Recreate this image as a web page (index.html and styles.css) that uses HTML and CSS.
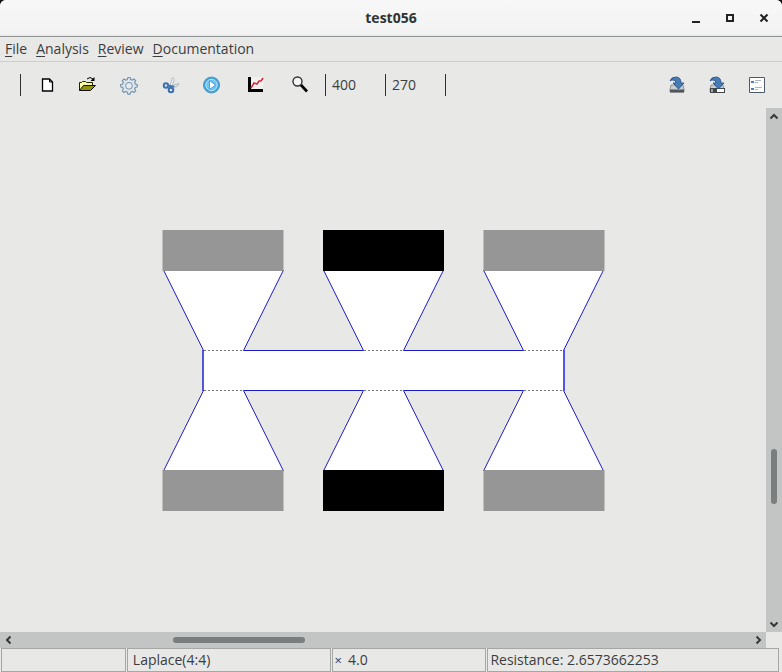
FILE: index.html
```html
<!DOCTYPE html>
<html lang="en">
<head>
<meta charset="utf-8">
<title>test056</title>
<link rel="stylesheet" href="styles.css">
</head>
<body>
<div class="window">
  <header class="titlebar">
    <h1 class="title">test056</h1>
    <div class="window-controls">
      <button type="button" aria-label="Minimize"><svg width="12" height="12"><path d="M2 9h8v2H2z"/></svg></button>
      <button type="button" aria-label="Maximize"><svg width="12" height="12"><path d="M2 2h8v8H2zM4 4v4h4V4z" fill-rule="evenodd"/></svg></button>
      <button type="button" aria-label="Close"><svg width="12" height="12"><path d="M2.500 2.500l7 7m0-7l-7 7" stroke="#222" stroke-width="2"/></svg></button>
    </div>
  </header>

  <nav class="menubar">
    <button type="button"><u>F</u>ile</button>
    <button type="button"><u>A</u>nalysis</button>
    <button type="button"><u>R</u>eview</button>
    <button type="button"><u>D</u>ocumentation</button>
  </nav>

  <div class="toolbar">
    <span class="separator"></span>
    <div class="tools">
      <button type="button" aria-label="New">
        <svg width="24" height="24"><path d="M9.500 6h7l3 3v9h-10z" fill="#fff" stroke="#000" stroke-width="1.300"/><path d="M16.500 6v3h3" fill="none" stroke="#000"/></svg>
      </button>
      <button type="button" aria-label="Open">
        <svg width="24" height="24"><path d="M4.500 17.500v-8h2l1-1h3l1 1h6v3" fill="#fdfd9a" stroke="#222200"/><path d="M4.500 17.500l4-5h12l-5 5z" fill="#929312" stroke="#111"/><path d="M12 6q3-3 6 0" fill="none" stroke="#000"/><path d="M19.500 4v4h-4z"/></svg>
      </button>
      <button type="button" aria-label="Settings">
        <svg width="24" height="24" fill="none" stroke="#7896ae"><path d="M10.900 4.500h2.200l.6 2 1.500.6 1.800-1 1.700 1.700-1 1.800.6 1.500 2 .6v2.200l-2 .6-.6 1.500 1 1.800-1.700 1.700-1.800-1-1.500.6-.6 2h-2.200l-.6-2-1.500-.6-1.800 1-1.700-1.700 1-1.800-.6-1.500-2-.6v-2.200l2-.6.6-1.500-1-1.800L7 6.100l1.800 1 1.500-.6z" fill="#dce6ec" stroke-width="1.200"/><circle cx="12" cy="12.800" r="3.400" fill="#e8e8e7"/></svg>
      </button>
      <button type="button" aria-label="Cut">
        <svg width="24" height="24" fill="none"><path d="M10.500 14L13.500 4.500l2 2-3 8z" fill="#e9eef1" stroke="#a3b2bd" stroke-width=".8"/><path d="M10 13.500l10-3-2 3-6 1.500z" fill="#dce4e8" stroke="#a3b0b8" stroke-width=".8"/><g stroke="#3c70ae" stroke-width="2"><circle cx="7" cy="12.500" r="2.200"/><circle cx="12" cy="17" r="2.300"/></g><path d="M9 12.500l5 1-2 2" stroke="#4476ae" stroke-width="1.800"/></svg>
      </button>
      <button type="button" aria-label="Run">
        <svg width="24" height="24"><circle cx="10.500" cy="12" r="8" fill="#39a3df" stroke="#5797bf"/><circle cx="10.500" cy="12" r="5.700" fill="#69c4f3" stroke="#c2e9fb"/><path d="M8.500 7.500l6 4.500-6 4.500z" fill="#fff" stroke="#2387c5" stroke-width=".7"/></svg>
      </button>
      <button type="button" aria-label="Plot">
        <svg width="24" height="24"><path d="M8 4h12v12H8z" fill="#f3f0f0"/><path d="M5 4h3v12h12v3H5z"/><path d="M8 15l3-5 3 1 2-3h2l2-3" fill="none" stroke="#dc2634" stroke-width="1.500"/></svg>
      </button>
      <button type="button" aria-label="Zoom">
        <svg width="24" height="24"><circle cx="12.500" cy="8.500" r="4.500" fill="#f5f5f5" stroke="#333" stroke-width="1.400"/><path d="M16 12l6 6.500" stroke="#000" stroke-width="2.700"/></svg>
      </button>
    </div>
    <div class="sizes">
      <input type="text" value="400" aria-label="Width">
      <input type="text" value="270" aria-label="Height">
      <span class="separator"></span>
    </div>
    <div class="exports">
      <button type="button" aria-label="Save">
        <svg width="24" height="24"><path d="M6 12h12l1 4v3H5v-3z" fill="#c9ced0" stroke="#74797c" stroke-width=".7"/><path d="M5 16.500h14v3H5z" fill="#51565a"/><path d="M5 8q1-4 6-4 5 0 5 6h3l-5.500 6L8 10h3q0-3-3-3-2 0-3 1z" fill="#477cb5" stroke="#204a83" stroke-width=".8"/></svg>
      </button>
      <button type="button" aria-label="Save as">
        <svg width="24" height="24"><path d="M6 12h12l1 4v3H5v-3z" fill="#c9ced0" stroke="#74797c" stroke-width=".7"/><path d="M5 15h15v5H5z" fill="#414648"/><path d="M12 16h7v3h-7z" fill="#fff"/><path d="M6 16h2v3H6z" fill="#a0a69f"/><path d="M5 8q1-4 6-4 5 0 5 6h3l-5.500 6L8 10h3q0-3-3-3-2 0-3 1z" fill="#477cb5" stroke="#204a83" stroke-width=".8"/></svg>
      </button>
      <button type="button" aria-label="Properties">
        <svg width="24" height="24"><path d="M4.500 4.500h15v15h-15z" fill="#fff" stroke="#4f5a66"/><path d="M6 8h3v2H6zM6 15h3v2H6z" fill="#4b81c0"/><path d="M10 7.500h6M10 9.500h3M10 14.500h7M10 16.500h3" stroke="#aeb7bf"/></svg>
      </button>
    </div>
  </div>

  <main class="viewport">
    <div class="canvas">
      <svg class="drawing" width="442" height="282" viewBox="162 229 442 282" role="img" aria-label="Device geometry">
        <path d="M163.500 270L203.500 350.500V390.500L163.500 471H283.500L243.500 390.500H363.500L323.500 471H443.500L403.500 390.500H523.500L483.500 471H603.500L563.500 390.500V350.500L603.500 270H483.500L523.500 350.500H403.500L443.500 270H323.500L363.500 350.500H243.500L283.500 270Z" fill="#fff"/>
        <path d="M204 350.500h39M204 390.500h39M364 350.500h39M364 390.500h39M524 350.500h39M524 390.500h39" stroke="#777" stroke-dasharray="2 2"/>
        <g fill="none" stroke="#1c1cc4">
          <path d="M163.500 270L203.500 350.500M203.500 390.500L163.500 471M283.500 270L243.500 350.500H363.500L323.500 270M443.500 270L403.500 350.500H523.500L483.500 270M603.500 270L563.500 350.500M563.500 390.500L603.500 471M283.500 471L243.500 390.500H363.500L323.500 471M443.500 471L403.500 390.500H523.500L483.500 471"/>
          <path d="M203 350V391M564 350V391" stroke="#1414dc" stroke-width="1.400"/>
        </g>
        <path d="M162.500 230h121v41h-121zM483.500 230h121v41h-121zM162.500 470h121v41h-121zM483.500 470h121v41h-121z" fill="#969696"/>
        <path d="M323 230h121v41H323zM323 470h121v41H323z"/>
      </svg>
    </div>
    <div class="scrollbar vertical">
      <button type="button" aria-label="Scroll up"><svg width="16" height="16"><path d="M4.500 10.500L8 7l3.500 3.500"/></svg></button>
      <div class="track"><span class="before"></span><span class="thumb"></span><span class="after"></span></div>
      <button type="button" aria-label="Scroll down"><svg width="16" height="16"><path d="M4.500 6.500L8 10l3.500-3.500"/></svg></button>
    </div>
    <div class="scrollbar horizontal">
      <button type="button" aria-label="Scroll left"><svg width="16" height="16"><path d="M10.500 4.500L7 8l3.500 3.500"/></svg></button>
      <div class="track"><span class="before"></span><span class="thumb"></span><span class="after"></span></div>
      <button type="button" aria-label="Scroll right"><svg width="16" height="16"><path d="M6.500 4.500L10 8l-3.500 3.500"/></svg></button>
    </div>
  </main>

  <footer class="statusbar">
    <span></span>
    <span class="solver">Laplace(4:4)</span>
    <span class="scale"><small>×</small><b>4.0</b></span>
    <span>Resistance: 2.6573662253</span>
  </footer>
</div>
</body>
</html>
```
FILE: styles.css
```css
* { box-sizing: border-box; }

body {
  margin: 0;
  background: #111;
  color: #3b3d3e;
  font: 14px/20px "Open Sans", "Noto Sans", sans-serif;
}

button, input {
  margin: 0;
  padding: 0;
  border: 0;
  background: none;
  color: inherit;
  font: inherit;
}

svg { display: block; }

.window {
  display: flex;
  flex-direction: column;
  height: 100vh;
  overflow: hidden;
  border-radius: 6px 6px 0 0;
  background: #e8e8e7;
}

.titlebar {
  display: grid;
  grid-template-columns: 1fr auto 1fr;
  align-items: center;
  height: 37px;
  border-bottom: 1px solid #919494;
  background: linear-gradient(#f8f8f8, #f2f2f2 34px, #e4e4e4);
}

.title {
  grid-column: 2;
  margin: 0;
  color: #303435;
  font-size: 14px;
  font-weight: 700;
}

.window-controls {
  display: flex;
  justify-content: flex-end;
  gap: 22px;
  padding-right: 12px;
  fill: #222;
}

.menubar {
  display: flex;
  gap: 9px;
  height: 25px;
  padding: 0 5px;
  border-bottom: 1px solid #cececd;
}

.menubar u { text-underline-offset: 2px; }

.toolbar {
  display: flex;
  align-items: center;
  height: 46px;
  padding: 0 5px 0 20px;
}

.separator {
  width: 1px;
  height: 22px;
  background: #303030;
}

.tools {
  display: flex;
  margin: 0 7px 0 3px;
}

.tools button, .exports button {
  display: grid;
  place-items: center;
  width: 42px;
  height: 36px;
}

.exports { display: flex; margin-left: auto; }
.exports button { width: 40px; }

.sizes { display: flex; }

.sizes input {
  width: 60px;
  height: 22px;
  padding: 0 0 2px 6px;
  border-left: 1px solid #303030;
}

.viewport {
  flex: 1;
  display: grid;
  grid-template: 1fr 16px / 1fr 16px;
  min-height: 0;
}

.canvas {
  display: grid;
  place-items: center;
  overflow: hidden;
}

.drawing { overflow: visible; }

.scrollbar {
  display: flex;
  background: #c3c5c4;
}

.scrollbar svg {
  fill: none;
  stroke: #343839;
  stroke-width: 2;
}

.vertical { flex-direction: column; }

.track {
  flex: 1;
  display: flex;
  flex-direction: inherit;
  align-items: center;
}

.thumb {
  border-radius: 3px;
  background: #7b7e7e;
}

.vertical .before { flex: 325; }
.vertical .thumb { flex: 55; width: 6px; }
.vertical .after { flex: 112; }
.horizontal .before { flex: 157; }
.horizontal .thumb { flex: 132; height: 6px; }
.horizontal .after { flex: 445; }

.statusbar {
  display: grid;
  grid-template-columns: 125fr 204fr 155fr 292fr;
  gap: 1px;
  height: 24px;
  padding: 0 3px 1px 1px;
}

.statusbar span {
  padding-left: 2px;
  border: 1px solid #a5a7a6;
  line-height: 22px;
  white-space: nowrap;
}

.statusbar .solver { padding-left: 5px; }

.statusbar .scale {
  display: flex;
  gap: 6px;
}

.scale small { font-size: 13px; }
.scale b { font-weight: 400; }
```
